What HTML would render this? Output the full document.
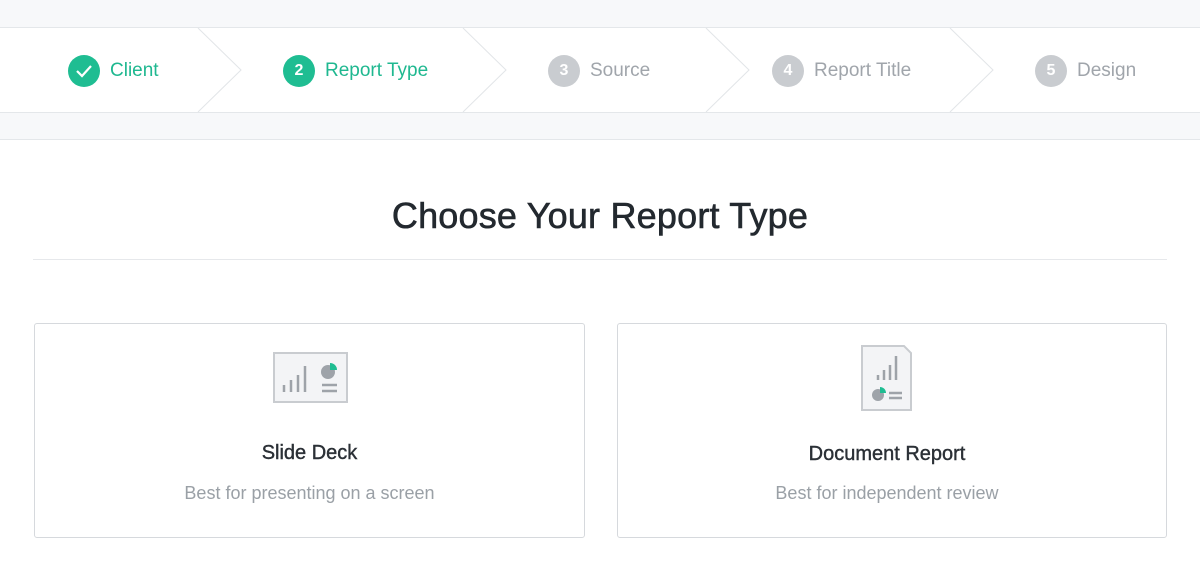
<!DOCTYPE html>
<html><head><style>
*{margin:0;padding:0;box-sizing:border-box}
body{width:1200px;height:566px;background:#fff;font-family:"Liberation Sans",Arial,sans-serif;position:relative;overflow:hidden}
.top{position:absolute;left:0;top:0;width:1200px;height:28px;background:#f7f8fa;border-bottom:1px solid #e4e7ea}
.steps{position:absolute;left:0;top:28px;width:1200px;height:84px;background:#fff}
.band{position:absolute;left:0;top:112px;width:1200px;height:28px;background:#f7f8fa;border-top:1px solid #e4e7ea;border-bottom:1px solid #e4e7ea}
.step{position:absolute;top:55px;height:32px;display:flex;align-items:center;font-size:19px;color:#a0a5ab}
.c{width:32px;height:32px;border-radius:50%;background:#c9ccd0;color:#fff;font-weight:bold;font-size:16px;display:flex;align-items:center;justify-content:center;margin-right:10px}
.act{color:#1fb890}.act .c{background:#1fbd92}
h1{position:absolute;top:195px;left:0;width:1200px;text-align:center;font-size:36px;font-weight:normal;color:#23292f;letter-spacing:0.2px;-webkit-text-stroke:0.6px #23292f}
.hr{position:absolute;left:33px;top:259px;width:1134px;height:1px;background:#e6e8eb}
.card{position:absolute;top:323px;height:215px;border:1px solid #d6d9dd;border-radius:3px}
.t{position:absolute;width:100%;text-align:center;font-size:20px;color:#2b3036;-webkit-text-stroke:0.4px #2b3036}
.s{position:absolute;width:100%;text-align:center;font-size:18px;color:#9aa0a6}
</style></head><body>
<div class="top"></div>
<div class="steps"></div>
<svg style="position:absolute;left:0;top:28px" width="1200" height="84">
<g fill="none" stroke="#e2e5e8" stroke-width="1">
<polyline points="198,0 241,42 198,84"/>
<polyline points="463,0 506,42 463,84"/>
<polyline points="706,0 749,42 706,84"/>
<polyline points="950,0 993,42 950,84"/>
</g></svg>
<div class="band"></div>
<div class="step act" style="left:68px"><div class="c"><svg width="18" height="14"><polyline points="2,7 7,12 16,2" fill="none" stroke="#fff" stroke-width="2.2"/></svg></div>Client</div>
<div class="step act" style="left:283px"><div class="c">2</div>Report Type</div>
<div class="step" style="left:548px"><div class="c">3</div>Source</div>
<div class="step" style="left:772px"><div class="c">4</div>Report Title</div>
<div class="step" style="left:1035px"><div class="c">5</div>Design</div>
<h1>Choose Your Report Type</h1>
<div class="hr"></div>
<div class="card" style="left:34px;width:551px">
<svg style="position:absolute;left:238px;top:28px" width="76" height="52">
<rect x="1" y="1" width="73" height="49" fill="#f3f4f6" stroke="#c9ccd0" stroke-width="2"/>
<g stroke="#9ea3a9" stroke-width="2.5"><line x1="11" y1="40" x2="11" y2="33"/><line x1="18" y1="40" x2="18" y2="28"/><line x1="25" y1="40" x2="25" y2="23"/><line x1="32" y1="40" x2="32" y2="14"/>
<line x1="49" y1="33" x2="64" y2="33"/><line x1="49" y1="39" x2="64" y2="39"/></g>
<circle cx="55" cy="20" r="7" fill="#9ea3a9"/><path d="M57,11 A7,7 0 0 1 64,18 L57,18Z" fill="#1fbd92"/>
</svg>
<div class="t" style="top:118px">Slide Deck</div>
<div class="s" style="top:159px">Best for presenting on a screen</div>
</div>
<div class="card" style="left:617px;width:550px">
<svg style="position:absolute;left:243px;top:21px" width="52" height="67">
<path d="M1,1 H43 L50,8 V65 H1Z" fill="#f3f4f6" stroke="#c9ccd0" stroke-width="2"/>
<g stroke="#9ea3a9" stroke-width="2.5"><line x1="17" y1="35" x2="17" y2="30"/><line x1="23" y1="35" x2="23" y2="25"/><line x1="29" y1="35" x2="29" y2="20"/><line x1="35" y1="35" x2="35" y2="11"/>
<line x1="28" y1="48" x2="41" y2="48"/><line x1="28" y1="53" x2="41" y2="53"/></g>
<circle cx="17" cy="50" r="6" fill="#9ea3a9"/><path d="M19,42 A6,6 0 0 1 25,48 L19,48Z" fill="#1fbd92"/>
</svg>
<div class="t" style="top:119px;left:-5px">Document Report</div>
<div class="s" style="top:159px;left:-5px">Best for independent review</div>
</div>
</body></html>
